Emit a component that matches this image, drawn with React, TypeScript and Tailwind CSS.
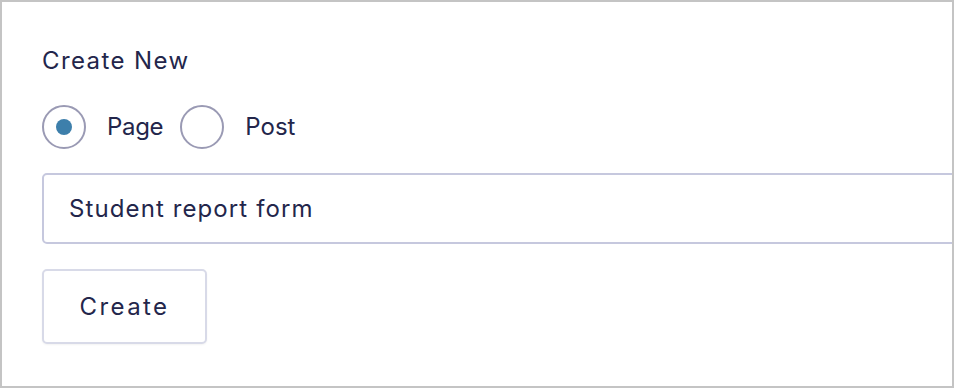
import React, { useState } from "react";

export default function App() {
  const [type, setType] = useState("page");
  return (
    <div className="w-[954px] h-[388px] overflow-hidden bg-white border-2 border-[#c4c4c4] font-['Inter',sans-serif] text-[#23264b]">
      <div className="pl-[40px] pt-[44px] flex flex-col w-[1000px]">
        <div className="text-[24px] leading-[30px] tracking-[1.4px]">Create New</div>
        <div className="flex items-center mt-[29px] h-[44px]">
          <label className="flex items-center cursor-pointer" onClick={() => setType("page")}>
            <span className="w-[44px] h-[44px] rounded-full border-2 border-[#9a9ab4] flex items-center justify-center">
              {type === "page" && <span className="w-[16px] h-[16px] rounded-full bg-[#3d7fab]" />}
            </span>
            <span className="ml-[21px] text-[24px] tracking-[-0.3px]">Page</span>
          </label>
          <label className="flex items-center cursor-pointer ml-[17px]" onClick={() => setType("post")}>
            <span className="w-[44px] h-[44px] rounded-full border-2 border-[#9a9ab4] flex items-center justify-center">
              {type === "post" && <span className="w-[16px] h-[16px] rounded-full bg-[#3d7fab]" />}
            </span>
            <span className="ml-[21px] text-[24px] tracking-[0px]">Post</span>
          </label>
        </div>
        <input
          defaultValue="Student report form"
          className="mt-[24px] h-[71px] w-[950px] rounded-[5px] border-2 border-[#c6c8de] px-[25px] text-[24px] tracking-[1.1px] text-[#23264b] outline-none"
        />
        <button className="mt-[25px] w-[165px] h-[75px] rounded-[5px] border-2 border-[#d8dae8] bg-white text-[24px] tracking-[2.4px] shadow-[0_1px_2px_rgba(0,0,0,0.05)]">
          Create
        </button>
      </div>
    </div>
  );
}
